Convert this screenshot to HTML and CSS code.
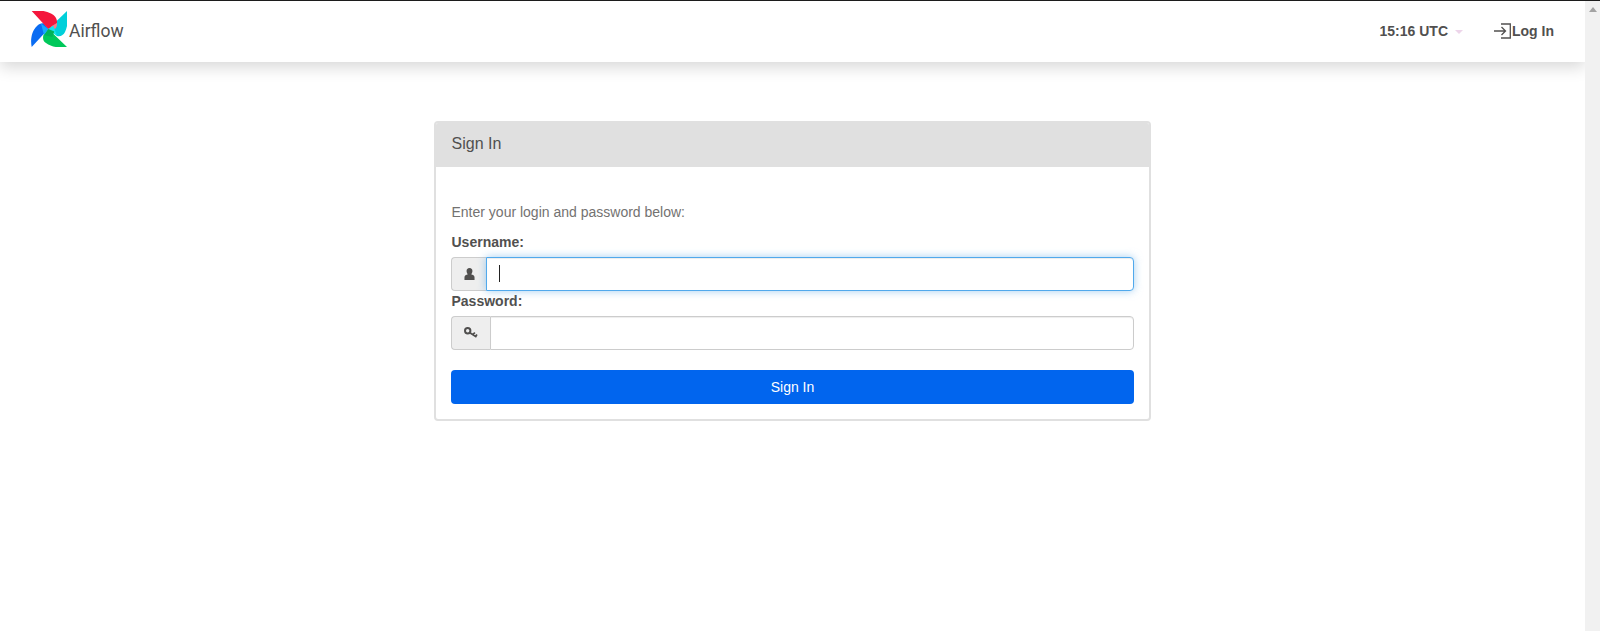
FILE: index.html
```html
<!DOCTYPE html>
<html lang="en">
<head>
<meta charset="utf-8">
<title>Airflow</title>
<link rel="stylesheet" href="styles.css">
</head>
<body>
<div class="app">
  <div class="page">
    <nav class="navbar">
      <a class="brand" href="#">
        <svg class="logo" viewBox="0 0 36 36" width="36" height="36" aria-hidden="true">
          <path fill="#0a6cf2" d="M.7 36C-.8 29 .5 20 6 15c2-2 4.500-3 7-2.500l4.300 5.500z"/>
          <path fill="#00c85a" d="M36 36c-7 1-15 .5-21-4-3-2-3.500-5-2.500-8l4.800-6z"/>
          <path fill="#00d0da" d="M36 0c1.200 7 1 15-2 21-1.500 3-4.500 5-8 4L17.300 18z"/>
          <path fill="#f4173c" d="M.7 0c7-1 13.500-.5 19.300 2.500 4 2 6.500 5.500 6 9.500L17.300 18z"/>
          <path fill="#ff7a86" d="M20 15.500l6-3.500c.3 2-.4 4.500-2 6z"/>
          <path fill="#18e4ee" d="M17.300 18l5-3.500 3.700 10.500z"/>
          <path fill="#00b35a" d="M17.300 18l-4.800 6 8.800 2 2-5.500z"/>
          <path fill="#16a8ff" d="M17.300 18l-7.300-5.500 3 11.500z"/>
        </svg>
        <span class="brand-name">Airflow</span>
      </a>
      <div class="nav-right">
        <span class="clock">15:16 UTC<i class="caret"></i></span>
        <a class="login" href="#">
          <svg class="login-icon" viewBox="0 0 18 16" width="18" height="16" aria-hidden="true">
            <path fill="none" stroke="#51504f" stroke-width="1.300" d="M7 1h9.300v14H7M0 8h11M7.500 4l4 4-4 4"/>
          </svg>Log In
        </a>
      </div>
    </nav>
    <main class="content">
      <section class="panel">
        <header class="panel-head">Sign In</header>
        <div class="panel-body">
          <p class="hint">Enter your login and password below:</p>
          <label class="field-label" for="username">Username:</label>
          <div class="group">
            <span class="addon addon-user">
              <svg viewBox="0 0 12 13" width="11" height="12" aria-hidden="true">
                <path fill="#51504f" d="M6 0c2.200 0 3.200 1.500 3.200 3.300C9.200 5 8.400 6.300 7.800 6.900c1.800.5 3.700 1.300 3.700 3.300V13H.5v-2.800C.5 8.200 2.400 7.400 4.200 6.900 3.600 6.300 2.800 5 2.800 3.300 2.800 1.500 3.800 0 6 0z"/>
              </svg>
            </span>
            <span class="input-wrap">
              <input class="input input-focus" id="username" type="text" aria-label="Username">
              <i class="text-caret"></i>
            </span>
          </div>
          <label class="field-label" for="password">Password:</label>
          <div class="group">
            <span class="addon addon-key">
              <svg class="key-icon" viewBox="0 0 14 11" width="14" height="11" aria-hidden="true">
                <circle cx="3.700" cy="3.700" r="2.700" fill="none" stroke="#51504f" stroke-width="2"/>
                <path fill="none" stroke="#51504f" stroke-width="1.800" d="M5.500 5.500l7 4.500M9 7.800l1.800-2.300M11.500 9.300l1.500-1.800"/>
              </svg>
            </span>
            <span class="input-wrap">
              <input class="input" id="password" type="password" aria-label="Password">
            </span>
          </div>
          <button class="submit" type="button">Sign In</button>
        </div>
      </section>
    </main>
  </div>
  <aside class="scrollbar"><i class="scroll-up"></i></aside>
</div>
</body>
</html>
```
FILE: styles.css
```css
* { box-sizing: border-box; }
html, body { margin: 0; height: 100%; overflow: hidden; }
body {
  font-family: "Liberation Sans", Arial, sans-serif;
  font-size: 14px;
  line-height: 20px;
  color: #51504f;
  background: #fff;
  border-top: 1px solid #1c1c1c;
}
.app { display: flex; height: 630px; }
.page { flex: 1; min-width: 0; }
.scrollbar { width: 15px; background: #f1f1f1; display: flex; justify-content: center; padding-top: 6px; }
.scroll-up { width: 0; height: 0; border: 4px solid transparent; border-top: 0; border-bottom: 5px solid #a3a3a3; }

.navbar {
  height: 61px;
  display: flex;
  align-items: center;
  justify-content: space-between;
  padding: 0 31px 0 31px;
  background: #fff;
  box-shadow: 0 5px 15px rgba(0, 0, 0, .16);
}
.brand { display: flex; align-items: center; text-decoration: none; color: #51504f; margin-bottom: 5px; }
.logo { display: block; }
.brand-name { font-family: Roboto, sans-serif; font-size: 17.500px; margin-left: 2px; margin-top: 3px; }
.nav-right { display: flex; align-items: center; font-weight: 700; margin-bottom: 2px; }
.clock { display: flex; align-items: center; }
.caret {
  width: 0; height: 0; margin-left: 7px; margin-top: 2px;
  border: 4px solid transparent; border-bottom: 0; border-top: 4px solid #edd5ea;
}
.login { display: flex; align-items: center; margin-left: 31px; color: #51504f; text-decoration: none; }
.login-icon { display: block; }

.content { padding-top: 59px; display: flex; justify-content: center; }
.panel {
  width: 717px;
  height: 300px;
  border: 2px solid #e0e0e0;
  border-radius: 4px;
  background: #fff;
  overflow: hidden;
}
.panel-head { height: 44px; padding: 10px 15.500px; font-size: 16px; line-height: 22px; background: #e0e0e0; }
.panel-body { padding: 35px 15px 0; }
.hint { margin: 0 0 10px .5px; color: #737271; }
.field-label { display: block; font-weight: 700; height: 25px; line-height: 20px; margin-left: .5px; }
.group { display: flex; height: 34px; }
.addon {
  display: flex; align-items: center; justify-content: center;
  background: #eee; border: 1px solid #ccc; border-right: 0; border-radius: 4px 0 0 4px;
}
.addon-user { width: 35px; }
.addon-key { width: 39px; }
.key-icon { margin-bottom: 2px; }
.input-wrap { position: relative; flex: 1; }
.input {
  display: block; width: 100%; height: 34px; padding: 6px 12px;
  border: 1px solid #ccc; border-radius: 0 4px 4px 0; outline: 0; background: #fff;
  font: inherit; color: inherit;
  box-shadow: inset 0 1px 1px rgba(0, 0, 0, .075);
}
.input-focus {
  border-color: #51a9ec;
  box-shadow: inset 0 1px 1px rgba(0, 0, 0, .075), 0 0 8px rgba(102, 175, 233, .6);
}
.text-caret { position: absolute; left: 13px; top: 8px; width: 1px; height: 17px; background: #222; }
.submit {
  display: block; width: 100%; height: 34px; margin-top: 20px;
  border: 0; border-radius: 4px; background: #0165ee; color: #fff; font: inherit;
}
```
